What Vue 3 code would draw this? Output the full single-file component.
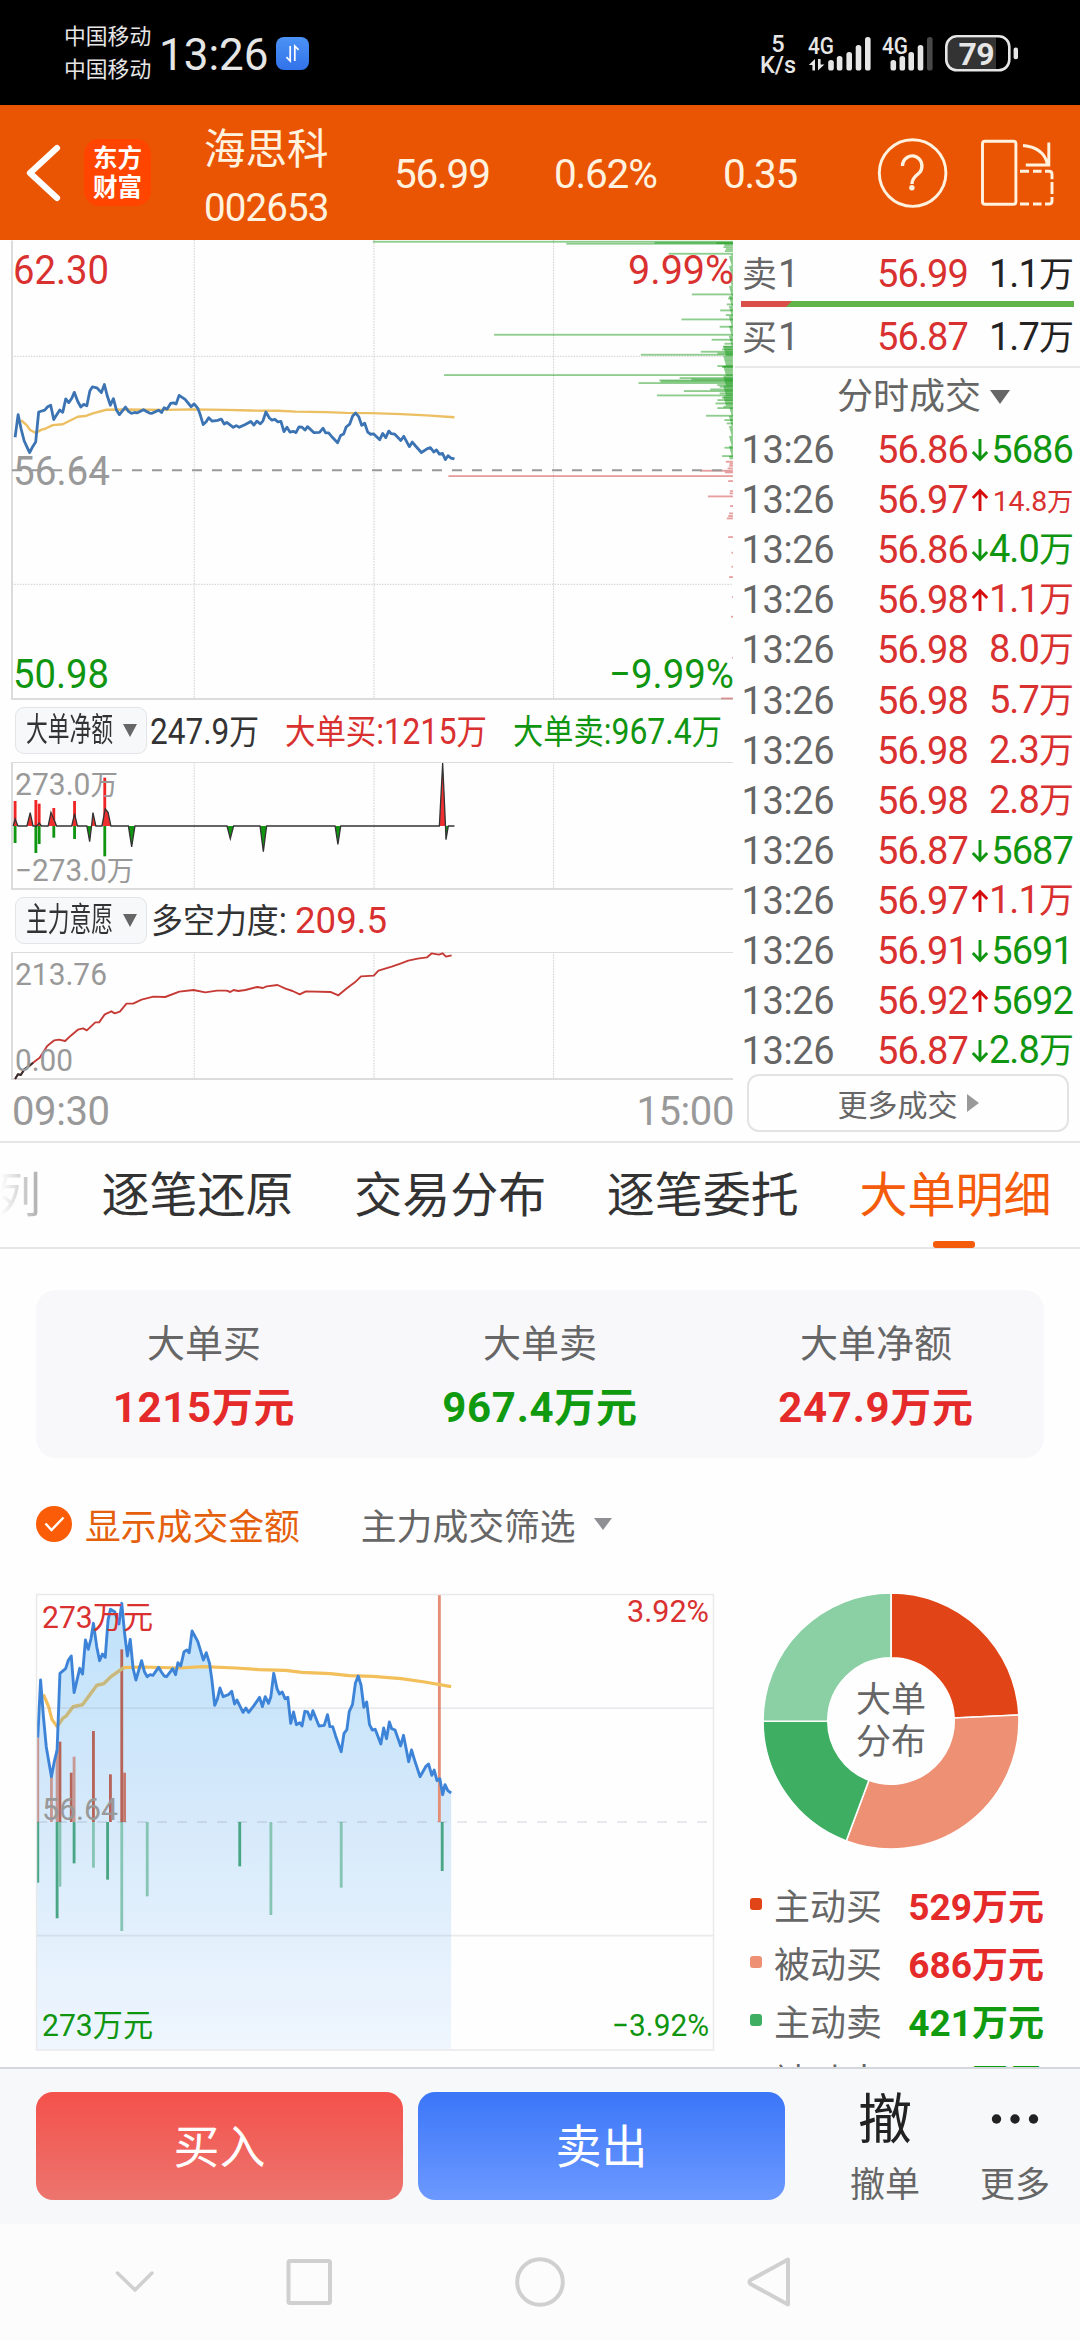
<template>
  <div class="phone">
    <div class="status">
      <div class="carriers">
        <span>中国移动</span>
        <span>中国移动</span>
      </div>
      <span class="clock">13:26</span>
      <span class="data-badge">
        <svg width="33" height="33" viewBox="0 0 33 33">
          <path d="M14.2 9V24L10.4 20.2M18.8 24V9L22.6 12.8" fill="none" stroke="#fff" stroke-width="1.7" />
        </svg>
      </span>
      <div class="speed">
        <span>5</span>
        <span>K/s</span>
      </div>
      <svg class="signals" width="222" height="50" viewBox="804 28 222 50">
        <g fill="#e6e6e6">
          <text x="808" y="53.5" class="net" textLength="26" lengthAdjust="spacingAndGlyphs">4G</text>
          <text x="882" y="53.5" class="net" textLength="26" lengthAdjust="spacingAndGlyphs">4G</text>
          <path d="M815 59v11.5h-2.600v-5.500h-3.600zM818 70.500v-11.500h2.600v5.500h3.800z" />
          <rect v-for="b in signal1" :key="b[0]" :x="b[0] - 2.8" :y="b[1]" width="5.6" :height="70.6 - b[1]" rx="2.6" />
          <rect v-for="b in signal2" :key="b[0]" :x="b[0] - 2.8" :y="b[1]" width="5.6" :height="70.6 - b[1]" rx="2.6" :fill="b[2]" />
        </g>
        <path d="M996 38v31h-40q-9 0-9-9v-13q0-9 9-9z" fill="#333" />
        <rect x="946.300" y="36.300" width="63" height="34" rx="10.500" fill="none" stroke="#e6e6e6" stroke-width="2.600" />
        <rect x="1013.600" y="47.600" width="4.400" height="11.600" rx="2" fill="#e6e6e6" />
        <text x="958.500" y="65" class="battery" textLength="36">79</text>
      </svg>
    </div>

    <header class="top">
      <svg class="back" width="40" height="64" viewBox="0 0 40 64">
        <path d="M34 7L7 32L34 57" fill="none" stroke="#fff" stroke-width="6.200" stroke-linecap="round" stroke-linejoin="round" />
      </svg>
      <div class="logo"><span>东方</span><span>财富</span></div>
      <div class="stock">
        <span class="name">海思科</span>
        <span class="code">002653</span>
      </div>
      <span class="quote q1">56.99</span>
      <span class="quote q2">0.62%</span>
      <span class="quote q3">0.35</span>
      <svg class="tools" width="184" height="80" viewBox="876 132.500 184 80">
        <g fill="none" stroke="#fff3e0" stroke-width="2.900">
          <circle cx="913.600" cy="172.600" r="33.300" />
          <path d="M903.500 165.500a9.700 10 0 1 1 15.500 8q-6 4.500-6 10" stroke-width="3.400" />
          <rect x="983.500" y="140.800" width="33.400" height="63" rx="2.500" />
          <path d="M1021 170.700h9M1034 170.700h8.500M1046 170.700h4q3 0 3 3v5M1053 181.500v12M1053 196.500v4q0 3-3 3h-4M1042.500 203.500h-8.500M1030 203.500h-9" />
          <path d="M1024 145q21 2 24.500 19M1049.800 142v22.500h-23" />
        </g>
        <circle cx="912.900" cy="187.300" r="2.700" fill="#fff3e0" />
      </svg>
    </header>

    <section class="market">
      <div class="left">
        <svg class="plot" width="735" height="463" viewBox="0 240 735 463">
          <path d="M194.200 240V698M553.600 240V698" class="grid" />
          <path d="M374 240V698" class="grid wide" />
          <path d="M12 356.300H733M12 584.300H733" class="grid" />
          <path d="M12 240.500V699H733" class="frame" />
          <g transform="translate(0 235) scale(.47193 .33333)">
            <rect v-for="(b, i) in sellDepth" :key="'s' + i" :x="b[1]" :y="b[0] - 2.500" :width="1553 - b[1]" height="5.500" fill="rgba(18,150,18,.47)" />
            <rect v-for="(b, i) in buyDepth" :key="'b' + i" :x="b[1]" :y="b[0] - 2.500" :width="1553 - b[1]" height="5.500" fill="rgba(205,50,50,.47)" />
          </g>
          <path d="M12 470.300H728" class="zero" />
          <g transform="translate(0 235) scale(.47193 .33333) translate(32 706) scale(1.0628 .3924) translate(-80 -756)">
            <polyline :points="average" class="line" stroke="#ecbf62" stroke-width="2.400" />
            <polyline :points="price" class="line" stroke="#3b73b3" stroke-width="2.800" />
          </g>
          <text v-for="l in mainLabels" :key="l.t" :x="l.x" :y="l.y" :fill="l.c" :textLength="l.w" lengthAdjust="spacingAndGlyphs" class="big">{{ l.t }}</text>
        </svg>

        <div class="info">
          <div class="chip"><span>大单净额</span><i></i></div>
          <svg width="588" height="50" viewBox="147 705 588 50">
            <text x="150" y="744" fill="#333" textLength="109" lengthAdjust="spacingAndGlyphs">247.9<tspan class="han">万</tspan></text>
            <text x="285" y="744" fill="#d93030" textLength="202" lengthAdjust="spacingAndGlyphs"><tspan class="han">大单买</tspan>:1215<tspan class="han">万</tspan></text>
            <text x="513" y="744" fill="#109510" textLength="209" lengthAdjust="spacingAndGlyphs"><tspan class="han">大单卖</tspan>:967.4<tspan class="han">万</tspan></text>
          </svg>
        </div>

        <svg class="plot" width="735" height="136" viewBox="0 757 735 136">
          <defs>
            <linearGradient id="net" gradientUnits="userSpaceOnUse" x1="0" y1="204" x2="0" y2="582">
              <stop offset=".5" stop-color="#f03030" />
              <stop offset=".5" stop-color="#109510" />
            </linearGradient>
          </defs>
          <path d="M194.200 762V888M553.600 762V888" class="grid" />
          <path d="M374 762V888" class="grid wide" />
          <path d="M12 762.500H733" class="frame thin" />
          <path d="M12 762V889H733" class="frame" />
          <g transform="translate(0 695) scale(.47193 .33333)">
            <template v-for="b in spikes" :key="b[0]">
              <rect :x="b[0] - 3" :y="b[1]" width="6" :height="393 - b[1]" fill="#f02525" />
              <rect :x="b[0] - 3" y="393" width="6" :height="b[2] - 393" fill="#109510" />
            </template>
            <polyline :points="net" fill="url(#net)" stroke="#333" stroke-width="1.300" vector-effect="non-scaling-stroke" />
          </g>
          <text x="15" y="795" class="small" fill="#999" textLength="103" lengthAdjust="spacingAndGlyphs">273.0<tspan class="han-s">万</tspan></text>
          <text x="15" y="881" class="small" fill="#999" textLength="119" lengthAdjust="spacingAndGlyphs">−273.0<tspan class="han-s">万</tspan></text>
        </svg>

        <div class="info">
          <div class="chip"><span>主力意愿</span><i></i></div>
          <svg width="588" height="50" viewBox="147 895 588 50">
            <text x="151" y="933" fill="#333" textLength="136" lengthAdjust="spacingAndGlyphs"><tspan class="han">多空力度</tspan>:</text>
            <text x="295" y="933" fill="#d93030" textLength="92" lengthAdjust="spacingAndGlyphs">209.5</text>
          </svg>
        </div>

        <svg class="plot" width="735" height="137" viewBox="0 947 735 137">
          <path d="M194.200 952V1079M553.600 952V1079" class="grid" />
          <path d="M374 952V1079" class="grid wide" />
          <path d="M12 952.500H733" class="frame thin" />
          <path d="M12 952V1079H733" class="frame" />
          <g transform="translate(0 695) scale(.47193 .33333)">
            <polyline :points="force" class="line" stroke="#c63a36" stroke-width="1.900" />
            <polyline points="32,1152 38,1138 44,1140 52,1122 60,1115 70,1103" class="line" stroke="#333" stroke-width="2" />
          </g>
          <text x="15" y="985" class="small" fill="#999" textLength="92" lengthAdjust="spacingAndGlyphs">213.76</text>
          <text x="15" y="1071" class="small" fill="#999" textLength="58" lengthAdjust="spacingAndGlyphs">0.00</text>
        </svg>

        <div class="times"><span>09:30</span><span>15:00</span></div>
      </div>

      <div class="right">
        <div class="level">
          <span class="side"><b>卖</b>1</span><span class="price">56.99</span><span class="vol">1.1<b>万</b></span>
        </div>
        <div class="ratio"></div>
        <div class="level">
          <span class="side"><b>买</b>1</span><span class="price">56.87</span><span class="vol">1.7<b>万</b></span>
        </div>
        <div class="mode">分时成交<i></i></div>
        <div class="trade" v-for="(t, i) in trades" :key="i">
          <span class="time">13:26</span>
          <span class="price">{{ t.p }}</span>
          <svg width="18" height="24" viewBox="0 0 18 24">
            <path v-if="t.dir === 'up'" d="M9 23V3M1.800 10L9 2.500L16.200 10" fill="none" stroke="#d40c0c" stroke-width="2.900" />
            <path v-if="t.dir === 'down'" d="M9 1V21M1.800 14L9 21.500L16.200 14" fill="none" stroke="#109510" stroke-width="2.900" />
          </svg>
          <span class="vol" :class="[t.c, { tiny: t.tiny }]">{{ t.v }}<b v-if="t.wan">万</b></span>
        </div>
        <div class="more-trades">更多成交<i></i></div>
      </div>
    </section>

    <nav class="tabs">
      <span class="faded">列</span>
      <span v-for="t in tabs" :key="t" :class="{ active: t === '大单明细' }">{{ t }}</span>
    </nav>

    <section class="summary">
      <div v-for="s in summary" :key="s.name">
        <span class="label">{{ s.name }}</span>
        <span class="value" :class="s.c">{{ s.v }}<b>万元</b></span>
      </div>
    </section>

    <div class="filters">
      <svg width="36" height="36" viewBox="0 0 36 36">
        <circle cx="18" cy="18" r="18" fill="#fb5c08" />
        <path d="M9.500 17.500L15.500 24L27.500 11.500" fill="none" stroke="#fff" stroke-width="2.400" />
      </svg>
      <span class="show">显示成交金额</span>
      <span class="pick">主力成交筛选</span>
      <i></i>
    </div>

    <section class="detail">
      <svg width="735" height="475" viewBox="0 1592 735 475">
        <defs>
          <linearGradient id="area" x1="0" y1="0" x2="0" y2="1">
            <stop offset="0" stop-color="#bfe2fb" />
            <stop offset=".42" stop-color="#d3e8fa" />
            <stop offset="1" stop-color="#eff6fe" />
          </linearGradient>
        </defs>
        <g transform="translate(0 1570) scale(.47193 .33333)">
          <polygon :points="'78,1439 78,503 ' + price + ' 956,1439'" fill="url(#area)" />
          <rect v-for="(b, i) in orders" :key="i" :x="b[0] - 3" :y="Math.min(b[1], 756)" width="6" :height="Math.abs(756 - b[1])" :fill="b[2]" />
          <polyline :points="average" class="line" stroke="#f2bf5a" stroke-width="3.200" />
          <polyline points="121,470 133,445 140,438 155,410 175,404 190,375 205,346 220,341 235,320 262,293" class="line" stroke="#c5b981" stroke-width="3" />
          <polyline :points="price" class="line" stroke="#3d84d9" stroke-width="2.900" />
        </g>
        <path d="M36.500 1594.500H713.500V2050H36.500Z" fill="none" stroke="#e9e9ec" stroke-width="1.400" />
        <path d="M37 1708.200H713M37 1935.700H713" stroke="rgba(120,130,150,.15)" stroke-width="1.800" />
        <path d="M37 1822H713" stroke="rgba(90,100,120,.14)" stroke-width="2" stroke-dasharray="10 10" />
        <text x="42" y="1628" class="mid" fill="#d93030" textLength="111" lengthAdjust="spacingAndGlyphs">273万元</text>
        <text x="627" y="1622" class="mid" fill="#d93030" textLength="82" lengthAdjust="spacingAndGlyphs">3.92%</text>
        <text x="42" y="1820" class="mid" fill="#999" textLength="76" lengthAdjust="spacingAndGlyphs">56.64</text>
        <text x="42" y="2035.500" class="mid" fill="#109510" textLength="111" lengthAdjust="spacingAndGlyphs">273万元</text>
        <text x="612" y="2035.500" class="mid" fill="#109510" textLength="97" lengthAdjust="spacingAndGlyphs">−3.92%</text>
      </svg>
      <div class="share">
        <svg width="256" height="258" viewBox="-128 -129 256 258">
          <path v-for="s in slices" :key="s.c" :d="s.d" :fill="s.c" stroke="#fff" stroke-width="1.600" />
          <text x="0" y="-9" class="hole">大单</text>
          <text x="0" y="32.500" class="hole">分布</text>
        </svg>
        <div class="legend" v-for="s in shares" :key="s.name">
          <i :style="{ background: s.c }"></i>
          <span class="label">{{ s.name }}</span>
          <span class="value" :class="s.side">{{ s.v }}<b>万元</b></span>
        </div>
      </div>
    </section>

    <footer class="actions">
      <button class="buy">买入</button>
      <button class="sell">卖出</button>
      <div class="act"><span class="glyph">撤</span><span>撤单</span></div>
      <div class="act more">
        <svg width="50" height="54" viewBox="0 0 50 54"><circle cx="6.500" cy="27" r="4.700" /><circle cx="25" cy="27" r="4.700" /><circle cx="43.500" cy="27" r="4.700" /></svg>
        <span>更多</span>
      </div>
    </footer>

    <div class="sysnav">
      <svg width="1080" height="116" viewBox="0 2224 1080 116" fill="none" stroke="#d0d0d0" stroke-width="4" stroke-linecap="round" stroke-linejoin="round">
        <path d="M117.500 2273L135 2290L152 2273" stroke-width="3.500" />
        <rect x="288.500" y="2261" width="41.500" height="42" rx="1.500" />
        <circle cx="540" cy="2282" r="22.800" />
        <path d="M788 2259.500V2304.500L750.500 2284Q748.500 2282 750.500 2280Z" />
      </svg>
    </div>
  </div>
</template>

<script setup>
const signal1 = [[831, 60], [839.6, 56], [849.2, 52], [858.5, 45], [867.8, 37]]
const signal2 = [[893.3, 60], [902.3, 56], [911.2, 52], [920.5, 45], [929.8, 37, '#484848']]

// intraday price and average, shared by both price charts
const price =
  '80,503 86,330 92,440 98,530 104,580 109,620 115,575 121,540 127,310 139,296 145,270 151,258 157,368 169,295 175,312 181,210 187,238 193,205 198,160 205,230 211,272 217,252 223,262 229,150 234,118 243,125 252,162 258,100 264,190 270,258 276,208 282,295 288,330 300,272 306,305 312,320 318,314 324,316 336,292 342,306 348,318 353,320 366,296 372,314 377,278 383,288 390,245 396,240 401,248 407,183 419,214 431,270 437,248 444,280 449,330 455,406 461,385 466,354 473,380 484,374 491,364 497,402 502,390 515,427 521,414 527,427 538,407 550,382 556,410 562,380 569,400 574,380 580,310 587,356 592,372 598,366 604,386 610,382 616,460 622,426 628,464 635,458 640,468 646,424 652,426 658,448 663,422 676,468 687,466 694,434 699,470 705,470 711,497 723,545 729,490 735,479 740,425 747,403 753,340 759,318 765,345 771,412 777,396 783,464 789,480 795,478 807,522 813,474 819,506 825,456 830,476 837,480 849,528 855,496 866,575 872,540 878,568 890,620 902,590 908,582 915,616 920,600 926,632 932,626 938,674 943,644 949,662 956,669'
const average =
  '92,373 103,410 110,448 121,470 133,445 140,438 155,410 175,404 190,375 205,346 220,341 235,320 262,293 300,291 380,294 430,290 500,294 550,299 605,301 640,307 700,311 740,317 790,319 850,326 900,336 956,350'

const sellDepth = [
  [20, 790], [26, 1200], [23, 1387], [24, 1518], [30, 1535], [36, 1533], [42, 1538], [48, 1536], [56, 1417], [178, 1466], [190, 1543], [208, 1540], [226, 1526],
  [240, 1538], [253, 1444], [275, 1525], [299, 1047], [314, 1508], [326, 1535], [335, 1532], [343, 1530], [350, 1485], [355, 1520],
  [359, 1358], [393, 1520], [396, 1530], [420, 941], [429, 1440], [433, 1465], [436, 1397], [439, 1400], [444, 1353], [450, 1520],
  [455, 1525], [463, 1505], [468, 1449], [475, 1525], [481, 1392], [488, 1530], [495, 1520], [505, 1516], [519, 1520], [542, 1496],
  [555, 1535], [565, 1540], [638, 1535], [663, 1530]
]
for (let y = 60; y < 672; y += 5) {
  const dense = y > 330 && y < 520 ? 12 : 0
  sellDepth.push([y, 1550 - dense - ((y * 7) % 6)])
}
const buyDepth = [
  [680, 1538], [686, 1546], [692, 1545], [700, 1542], [707, 1483], [712, 1536], [723, 950], [738, 1543], [768, 1547], [775, 1546], [784, 1500], [813, 1547], [835, 1545],
  [843, 1543], [850, 1540], [906, 1543], [953, 1550], [995, 1550], [1026, 1545], [1086, 1551], [1145, 1549], [1268, 1551], [1390, 1528]
]

const mainLabels = [
  { t: '62.30', x: 13, y: 283.5, w: 96, c: '#d93030' },
  { t: '9.99%', x: 628, y: 283.5, w: 106, c: '#d93030' },
  { t: '56.64', x: 13, y: 485, w: 97, c: '#999' },
  { t: '50.98', x: 13, y: 688, w: 96, c: '#109510' },
  { t: '−9.99%', x: 609, y: 688, w: 125, c: '#109510' }
]

const spikes = [[32, 318, 444], [76, 315, 474], [83, 326, 447], [114, 339, 428], [158, 318, 432], [222, 248, 484]]
const net =
  '28,393 32,372 38,393 57,393 64,353 70,393 78,393 83,384 88,393 102,393 108,352 120,393 152,393 158,356 164,393 184,393 190,440 194,393 197,353 203,393 216,393 223,342 229,352 235,393 272,393 279,456 286,393 481,393 488,431 495,393 551,393 558,470 565,393 710,393 716,448 722,393 931,393 938,204 944,393 945,434 950,393 963,393'
const force =
  '32,1152 38,1138 44,1140 52,1122 60,1115 70,1103 84,1088 100,1053 115,1036 125,1034 138,1038 150,1022 165,1004 176,1000 184,1006 202,982 210,982 222,958 236,949 243,955 254,950 268,926 282,926 300,914 325,905 350,906 380,890 410,885 435,892 460,887 480,887 488,891 495,885 505,888 520,885 545,876 557,879 565,874 588,870 605,881 620,888 635,898 648,889 700,891 717,901 735,880 752,862 765,844 792,842 802,827 830,815 850,805 865,797 885,791 905,787 915,775 930,779 938,775 945,785 957,781'

const red = '#b66358'
const pink = '#c79793'
const green = '#48a685'
const mint = '#86c5b3'
const orders = [
  [80, 503, pink], [109, 620, pink], [121, 540, pink], [127, 515, red], [151, 608, red], [157, 560, pink], [198, 483, red],
  [234, 613, red], [258, 238, red], [264, 608, '#c5796d'], [931, 75, '#e58e76'],
  [80, 938, green], [121, 1045, green], [127, 950, mint], [157, 880, green], [198, 893, mint], [228, 929, green],
  [258, 1083, mint], [312, 979, mint], [508, 889, green], [574, 1035, mint], [723, 953, mint], [937, 903, green]
]

const trades = [
  { p: '56.86', dir: 'down', v: '5686', c: 'green' },
  { p: '56.97', dir: 'up', v: '14.8', wan: true, c: 'red', tiny: true },
  { p: '56.86', dir: 'down', v: '4.0', wan: true, c: 'green' },
  { p: '56.98', dir: 'up', v: '1.1', wan: true, c: 'red' },
  { p: '56.98', v: '8.0', wan: true, c: 'red' },
  { p: '56.98', v: '5.7', wan: true, c: 'red' },
  { p: '56.98', v: '2.3', wan: true, c: 'red' },
  { p: '56.98', v: '2.8', wan: true, c: 'red' },
  { p: '56.87', dir: 'down', v: '5687', c: 'green' },
  { p: '56.97', dir: 'up', v: '1.1', wan: true, c: 'red' },
  { p: '56.91', dir: 'down', v: '5691', c: 'green' },
  { p: '56.92', dir: 'up', v: '5692', c: 'green' },
  { p: '56.87', dir: 'down', v: '2.8', wan: true, c: 'green' }
]

const tabs = ['逐笔还原', '交易分布', '逐笔委托', '大单明细']

const summary = [
  { name: '大单买', v: '1215', c: 'red' },
  { name: '大单卖', v: '967.4', c: 'green' },
  { name: '大单净额', v: '247.9', c: 'red' }
]

const shares = [
  { name: '主动买', v: 529, c: '#e14417', side: 'red' },
  { name: '被动买', v: 686, c: '#ee9074', side: 'red' },
  { name: '主动卖', v: 421, c: '#3eae63', side: 'green' },
  { name: '被动卖', v: 546, c: '#8bcfa4', side: 'green' }
]

const total = shares.reduce((sum, s) => sum + s.v, 0)
let angle = 0
const slices = shares.map((s) => {
  const from = angle
  angle += (s.v / total) * Math.PI * 2
  const at = (r, a) => `${r * Math.sin(a)} ${-r * Math.cos(a)}`
  return {
    c: s.c,
    d: `M${at(128, from)}A128 128 0 0 1 ${at(128, angle)}L${at(63.2, angle)}A63.2 63.2 0 0 0 ${at(63.2, from)}Z`
  }
})
</script>

<style>
body {
  background: #fff;
}
</style>

<style scoped>
.phone {
  width: 1080px;
  height: 2340px;
  overflow: hidden;
  display: flex;
  flex-direction: column;
  font-family: Roboto, "Noto Sans CJK SC", sans-serif;
  color: #333;
  background: #fefefe;
  white-space: nowrap;
}

svg {
  display: block;
  flex: none;
}

b {
  font-weight: inherit;
  font-size: .92em;
}

.red {
  color: #e52a2a;
}

.green {
  color: #109a10;
}

/* status bar */
.status {
  height: 105px;
  flex: none;
  box-sizing: border-box;
  padding-left: 64px;
  background: #000;
  color: #e6e6e6;
  display: flex;
  align-items: center;
}

.carriers {
  width: 95px;
  display: flex;
  flex-direction: column;
  font-size: 21.8px;
  line-height: 33px;
  padding-top: 1px;
}

.clock {
  width: 117px;
  font-size: 44px;
  line-height: 50px;
  padding-top: 5px;
}

.data-badge {
  width: 33px;
  height: 33px;
  margin-top: 2px;
  border-radius: 8px;
  background: linear-gradient(#4b93f5, #3272ea);
}

.speed {
  width: 44px;
  margin-left: 447px;
  padding-top: 4px;
  display: flex;
  flex-direction: column;
  align-items: center;
  font-size: 23.5px;
  font-weight: 500;
  line-height: 21px;
}

.signals {
  margin-top: 1px;
  margin-left: 4px;
}

.net {
  font-size: 23px;
  font-weight: 500;
}

.battery {
  font-size: 32px;
  font-weight: 700;
  fill: #e6e6e6;
}

/* title bar */
.top {
  height: 135px;
  flex: none;
  background: #ea5504;
  color: #fff3e0;
  display: flex;
  align-items: center;
}

.back {
  margin-left: 23px;
}

.logo {
  width: 67px;
  height: 67px;
  margin-left: 21px;
  border-radius: 15px;
  background: #ff4500;
  color: #fff;
  font-size: 24.5px;
  font-weight: 700;
  line-height: 29px;
  display: flex;
  flex-direction: column;
  align-items: center;
  justify-content: center;
}

.stock {
  width: 190px;
  margin-left: 53px;
  display: flex;
  flex-direction: column;
  line-height: 58px;
  padding-top: 13px;
}

.name {
  font-size: 41.5px;
}

.code {
  font-size: 38.5px;
  letter-spacing: -.9px;
}

.quote {
  font-size: 40.5px;
  letter-spacing: -1.2px;
  padding-top: 2px;
}

.q1 {
  width: 160px;
}

.q2 {
  width: 169px;
}

.q3 {
  width: 152px;
}

/* market panel */
.market {
  height: 901px;
  flex: none;
  display: flex;
  border-bottom: 2px solid #e6e6e6;
}

.left {
  width: 735px;
  flex: none;
}

.plot {
  overflow: visible;
}

.grid {
  fill: none;
  stroke: #cfcfcf;
  stroke-width: 1;
  stroke-dasharray: 1.5 1.2;
}

.wide {
  stroke: #e6e6e6;
  stroke-width: 2;
}

.frame {
  fill: none;
  stroke: #dcdcdc;
  stroke-width: 2;
}

.thin {
  stroke-width: 1.2;
}

.zero {
  stroke: #999;
  stroke-width: 2;
  stroke-dasharray: 10 10;
}

.line {
  fill: none;
  stroke-linejoin: round;
  vector-effect: non-scaling-stroke;
}

.big {
  font-size: 41px;
}

.small {
  font-size: 30.5px;
}

.mid {
  font-size: 31px;
}

.info {
  height: 54px;
  display: flex;
  align-items: center;
}

.info text {
  font-size: 36px;
}

.han {
  font-size: 34px;
}

.han-s {
  font-size: 28px;
}

.chip {
  width: 132px;
  height: 47px;
  box-sizing: border-box;
  margin: 0 0 0 15px;
  border: 1.5px solid #e2e4e7;
  border-radius: 9px;
  background: #f7f8fa;
  display: flex;
  align-items: center;
}

.chip span {
  width: 97px;
  padding-left: 10px;
  box-sizing: border-box;
  font-size: 33px;
  line-height: 40px;
  transform: scaleX(.66);
  transform-origin: 10px 50%;
}

.chip i {
  margin-left: 10px;
  border: 7px solid transparent;
  border-top: 13px solid #666;
  border-bottom: 0;
}

.times {
  height: 57px;
  padding: 0 1px 0 12px;
  display: flex;
  justify-content: space-between;
  font-size: 40px;
  line-height: 55px;
  letter-spacing: -.4px;
  color: #999;
}

/* order book and trades */
.right {
  width: 345px;
  flex: none;
  box-sizing: border-box;
}

.level {
  height: 61px;
  display: flex;
  line-height: 68px;
  font-size: 38px;
  letter-spacing: -.9px;
  color: #222;
}

.level .side {
  width: 142px;
  padding-left: 7px;
  box-sizing: border-box;
  color: #666;
}

.level .side b {
  letter-spacing: 1px;
}

.price {
  color: #d93030;
}

.level .vol {
  margin-left: auto;
  padding-right: 7px;
}

.ratio {
  height: 6px;
  margin: 0 6px;
  background: linear-gradient(135deg, #d9504a 35.5px, #62b34a 36.5px);
}

.ratio + .level {
  height: 59px;
  line-height: 60px;
  border-bottom: 2px solid #e8e8e8;
}

.mode {
  height: 57px;
  line-height: 58px;
  padding-left: 102px;
  font-size: 36px;
  color: #666;
  display: flex;
  align-items: center;
}

.mode i {
  margin-left: 9px;
  border: 10.5px solid transparent;
  border-top: 14px solid #666;
  border-bottom: 0;
}

.trade {
  height: 50.1px;
  display: flex;
  align-items: center;
  font-size: 38px;
  line-height: 50px;
  letter-spacing: -.9px;
}

.trade .time {
  width: 142px;
  padding-left: 6.5px;
  box-sizing: border-box;
  color: #666;
  letter-spacing: -.4px;
}

.trade .price {
  width: 93.5px;
}

.trade .vol {
  width: 84.5px;
  display: flex;
  justify-content: flex-end;
  align-items: baseline;
}

.trade .vol.green {
  color: #109510;
}

.trade .vol.red {
  color: #d93030;
}

.trade .vol.tiny {
  font-size: 28.5px;
  letter-spacing: -.3px;
  padding-top: 4px;
}

.more-trades {
  width: 322px;
  height: 58px;
  box-sizing: border-box;
  margin: -2px 0 0 12px;
  border: 2px solid #e3e3e3;
  border-radius: 12px;
  display: flex;
  align-items: center;
  justify-content: center;
  font-size: 30px;
  color: #666;
}

.more-trades i {
  margin-left: 9px;
  border: 9.5px solid transparent;
  border-left: 12px solid #999;
  border-right: 0;
}

/* tabs */
.tabs {
  height: 106px;
  flex: none;
  box-sizing: border-box;
  border-bottom: 2px solid #e6e6e6;
  display: flex;
  gap: 60.6px;
  font-size: 48px;
  line-height: 105px;
}

.tabs span {
  position: relative;
}

.tabs .faded {
  width: 41px;
  display: flex;
  justify-content: flex-end;
  background: linear-gradient(90deg, #fff, #aaa);
  background-clip: text;
  color: transparent;
}

.tabs .active {
  color: #f45b0a;
}

.tabs .active::after {
  content: "";
  position: absolute;
  left: 74px;
  bottom: -1px;
  width: 42px;
  height: 7px;
  border-radius: 3px;
  background: #f45b0a;
}

/* summary card */
.summary {
  height: 168px;
  flex: none;
  margin: 41px 36px 0;
  border-radius: 20px;
  background: #f8f8fb;
  display: flex;
}

.summary div {
  flex: 1;
  display: flex;
  flex-direction: column;
  align-items: center;
  line-height: 64px;
  padding-top: 22px;
}

.summary .label {
  font-size: 38px;
  color: #666;
}

.summary .value {
  font-size: 42px;
  font-weight: 700;
  letter-spacing: .7px;
}

.summary .value b {
  font-size: 41px;
}

.filters {
  height: 60px;
  flex: none;
  margin: 36px 36px 0;
  display: flex;
  align-items: center;
  font-size: 35.8px;
}

.filters .show {
  margin-left: 13px;
  color: #e5600c;
}

.filters .pick {
  margin-left: 61px;
  color: #666;
}

.filters i {
  margin-left: 18px;
  border: 9.5px solid transparent;
  border-top: 12px solid #8f9094;
  border-bottom: 0;
}

/* detail chart and share donut */
.detail {
  height: 475px;
  flex: none;
  margin-top: 38px;
  overflow: hidden;
  display: flex;
}

.share {
  width: 345px;
}

.share svg {
  margin-left: 28px;
}

.hole {
  font-size: 35px;
  text-anchor: middle;
  fill: #666;
}

.legend {
  height: 58.2px;
  margin: 0 36px 0 15px;
  position: relative;
  top: 25px;
  display: flex;
  align-items: center;
  font-size: 36px;
}

.legend i {
  width: 12px;
  height: 12px;
  border-radius: 3px;
}

.legend .label {
  margin-left: 12px;
  color: #666;
}

.legend .value {
  margin-left: auto;
  font-size: 37px;
  font-weight: 700;
}

.legend .value b {
  font-size: 36px;
}

/* bottom bar */
.actions {
  height: 157px;
  flex: none;
  box-sizing: border-box;
  padding: 23px 0 0 36px;
  border-top: 2px solid #d3d7db;
  background: #f7f8fa;
  display: flex;
}

.actions button {
  width: 367px;
  height: 108px;
  margin-right: 15px;
  padding: 0 0 6px;
  border: 0;
  border-radius: 17px;
  font: 46px Roboto, "Noto Sans CJK SC", sans-serif;
  color: #fff;
}

.buy {
  background: linear-gradient(#f4514b, #ec756e);
}

.sell {
  background: linear-gradient(#3b76f8, #6c99ff);
}

.act {
  width: 70px;
  margin-left: 50px;
  display: flex;
  flex-direction: column;
  align-items: center;
  font-size: 35px;
  line-height: 71px;
  color: #666;
}

.act .glyph {
  font-size: 54px;
  line-height: 58px;
  color: #222;
}

.act svg {
  margin-bottom: 4px;
  fill: #222;
}

.act.more {
  margin-left: 60px;
}

.sysnav {
  height: 116px;
  flex: none;
  background: #fcfcfc;
}
</style>
